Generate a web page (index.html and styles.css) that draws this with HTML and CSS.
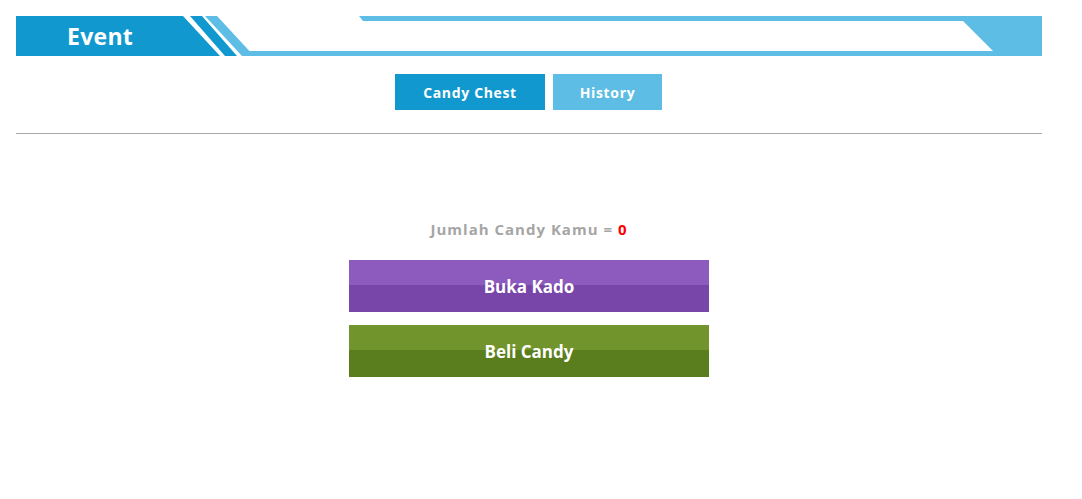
FILE: index.html
```html
<!DOCTYPE html>
<html lang="id">
<head>
<meta charset="utf-8">
<title>Event</title>
<link rel="stylesheet" href="styles.css">
</head>
<body>
<div class="page">
  <div class="banner">
    <svg class="banner-bg" width="1026" height="40" viewBox="0 0 1026 40" aria-hidden="true">
      <polygon points="0,0 167,0 204,40 0,40" fill="#1199cf"/>
      <polygon points="174,0 186,0 221,40 209,40" fill="#1199cf"/>
      <polygon points="189,0 201,0 238,40 226,40" fill="#5dbde5"/>
      <rect x="226" y="35" width="800" height="5" fill="#5dbde5"/>
      <polygon points="343,0 1026,0 1026,5 347,5" fill="#5dbde5"/>
      <polygon points="947,5 1026,5 1026,35 977,35" fill="#5dbde5"/>
    </svg>
    <h1 class="banner-title">Event</h1>
  </div>

  <nav class="tabs">
    <a class="tab tab-active" href="#">Candy Chest</a>
    <a class="tab tab-inactive" href="#">History</a>
  </nav>

  <hr class="divider">

  <section class="chest">
    <p class="count">Jumlah Candy Kamu = <span class="count-num">0</span></p>
    <button class="action action-purple">Buka Kado</button>
    <button class="action action-green">Beli Candy</button>
  </section>
</div>
</body>
</html>
```

FILE: styles.css
```css
html, body {
  margin: 0;
  padding: 0;
  background: #ffffff;
}

body {
  font-family: "Open Sans", "Liberation Sans", sans-serif;
}

.page {
  width: 1026px;
  padding: 16px 0 0 16px;
}

.banner {
  position: relative;
  height: 40px;
  display: flex;
  align-items: center;
}

.banner-bg {
  position: absolute;
  left: 0;
  top: 0;
  display: block;
}

.banner-title {
  position: relative;
  margin: 0 0 0 51px;
  font-weight: 700;
  font-size: 23px;
  line-height: 40px;
  color: #ffffff;
  letter-spacing: 0.3px;
}

.tabs {
  display: flex;
  justify-content: center;
  gap: 8px;
  margin-top: 18px;
  padding-right: 1px;
}

.tab {
  display: flex;
  align-items: center;
  justify-content: center;
  height: 36px;
  font-weight: 700;
  font-size: 14px;
  color: #ffffff;
  text-decoration: none;
  letter-spacing: 0.65px;
}

.tab-active {
  width: 150px;
  background: #1199cf;
}

.tab-inactive {
  width: 109px;
  background: #5dbde5;
}

.divider {
  margin: 23px 0 0 0;
  border: 0;
  border-top: 1px solid #a9a9a9;
  height: 0;
}

.chest {
  display: flex;
  flex-direction: column;
  align-items: center;
  padding-top: 86px;
}

.count {
  margin: 0 0 22px 0;
  font-size: 15px;
  font-weight: 700;
  line-height: 18px;
  color: #a5a5a5;
  letter-spacing: 1px;
}

.count-num {
  color: #ff0000;
}

.action {
  width: 360px;
  height: 52px;
  border: 0;
  margin: 0 0 13px 0;
  padding: 0;
  font-family: "Open Sans", "Liberation Sans", sans-serif;
  font-weight: 700;
  font-size: 17px;
  color: #ffffff;
  cursor: pointer;
}

.action-purple {
  background: linear-gradient(to bottom, #8d5bbd 0, #8d5bbd 25px, #7746a8 25px, #7746a8 100%);
}

.action-green {
  background: linear-gradient(to bottom, #71952c 0, #71952c 25px, #5a7e1d 25px, #5a7e1d 100%);
}
```
